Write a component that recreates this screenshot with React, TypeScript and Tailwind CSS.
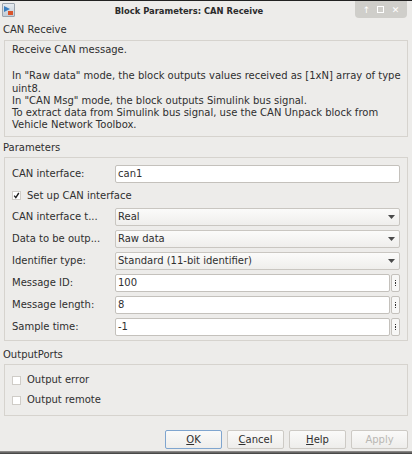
import React from 'react';

const Caret = () => (
  <svg width="7" height="4" viewBox="0 0 7 4" className="shrink-0">
    <path d="M0 0 L7 0 L3.5 4 Z" fill="#4a4a4a" />
  </svg>
);

const TextRow = ({ label, value, dots }: { label: string; value: string; dots?: boolean }) => (
  <div className="flex h-[18px] items-center">
    <div className="w-[103px] shrink-0 truncate">{label}</div>
    <div className="flex h-full flex-1 items-center rounded-[2px] border border-[#c4c1bc] bg-white pl-[2px]">{value}</div>
    {dots && (
      <div className="ml-[1px] flex h-full w-[9px] shrink-0 flex-col items-center justify-center gap-[1px] rounded-[2px] border border-[#c4c1bc] bg-[#f7f7f6]">
        <span className="h-[1.5px] w-[1.5px] bg-[#333]" />
        <span className="h-[1.5px] w-[1.5px] bg-[#333]" />
        <span className="h-[1.5px] w-[1.5px] bg-[#333]" />
      </div>
    )}
  </div>
);

const SelectRow = ({ label, value }: { label: string; value: string }) => (
  <div className="flex h-[18px] items-center">
    <div className="w-[103px] shrink-0 truncate">{label}</div>
    <div className="flex h-full flex-1 items-center justify-between rounded-[2px] border border-[#c9c6c1] bg-gradient-to-b from-[#fbfbfa] to-[#efeeec] pl-[2px] pr-[4px]">
      <span>{value}</span>
      <Caret />
    </div>
  </div>
);

const Check = ({ checked, label }: { checked?: boolean; label: string }) => (
  <div className="flex items-center">
    <div className="flex h-[9px] w-[9px] items-center justify-center border border-[#cfccc7] bg-white">
      {checked && (
        <svg width="7" height="7" viewBox="0 0 7 7">
          <path d="M1.2 3.6 L2.8 5.6 L5.8 1" stroke="#1e1e1e" strokeWidth="1.4" fill="none" />
        </svg>
      )}
    </div>
    <span className="ml-[6px]">{label}</span>
  </div>
);

const Button = ({ children, focus, disabled }: { children: React.ReactNode; focus?: boolean; disabled?: boolean }) => (
  <div
    className={
      'flex h-[19px] w-[57px] items-center justify-center rounded-[2px] border bg-gradient-to-b from-[#fafaf9] to-[#eeedeb] ' +
      (focus ? 'border-[#7fa5cf]' : 'border-[#cdcac5]') +
      (disabled ? ' text-[#b9b7b3]' : '')
    }
  >
    {children}
  </div>
);

export default function App() {
  return (
    <div className="flex h-[454px] w-[412px] flex-col overflow-hidden bg-[#edecea] font-['DejaVu_Sans',sans-serif] text-[10px] leading-[12px] text-[#2f2f2f]">
      {/* title bar */}
      <div className="relative flex h-[20px] shrink-0 items-center justify-center border-t border-[#222] pr-[34px]">
        <div className="absolute left-[2px] top-[2px] h-[14px] w-[13px] rounded-[1px] border border-[#9aa3ad] bg-gradient-to-b from-[#e6ebf0] to-[#c3ccd6]">
          <svg width="11" height="12" viewBox="0 0 11 12" className="absolute left-0 top-0">
            <path d="M1 2 L7 5 L1 8 Z" fill="#3b7fc0" />
            <rect x="5" y="7" width="5" height="4" fill="#d9542b" />
          </svg>
        </div>
        <span className="text-[8.4px] font-bold text-[#2b2b2b]">Block Parameters: CAN Receive</span>
        <div className="absolute right-[5px] top-0 flex h-[17px] w-[52px] items-center justify-around rounded-b-[4px] bg-[#cfceca] px-[4px] text-[9px] text-white">
          <span>↑</span>
          <span className="h-[7px] w-[7px] border border-white" />
          <span>✕</span>
        </div>
      </div>

      <div className="flex h-[20px] shrink-0 items-center pl-[3px]">CAN Receive</div>

      {/* description */}
      <div className="mx-[4px] h-[97px] shrink-0 border border-[#d6d3ce] pl-[7px] pr-[1px] pt-[3px] leading-[12.3px]">
        <p>Receive CAN message.</p>
        <p className="mt-[14px]">
          In "Raw data" mode, the block outputs values received as [1xN] array of type uint8.
          <br />
          In "CAN Msg" mode, the block outputs Simulink bus signal.
          <br />
          To extract data from Simulink bus signal, use the CAN Unpack block from Vehicle Network Toolbox.
        </p>
      </div>

      <div className="flex h-[20px] shrink-0 items-end pb-[3px] pl-[3px]">Parameters</div>

      {/* parameters */}
      <div className="mx-[4px] flex h-[184px] shrink-0 flex-col gap-[4px] border border-[#d6d3ce] px-[7px] pt-[7px]">
        <TextRow label="CAN interface:" value="can1" />
        <div className="flex h-[17px] items-center">
          <Check checked label="Set up CAN interface" />
        </div>
        <SelectRow label="CAN interface t..." value="Real" />
        <SelectRow label="Data to be outp..." value="Raw data" />
        <SelectRow label="Identifier type:" value="Standard (11-bit identifier)" />
        <TextRow label="Message ID:" value="100" dots />
        <TextRow label="Message length:" value="8" dots />
        <TextRow label="Sample time:" value="-1" dots />
      </div>

      <div className="flex h-[23px] shrink-0 items-end pb-[3px] pl-[3px]">OutputPorts</div>

      {/* output ports */}
      <div className="mx-[4px] flex h-[52px] shrink-0 flex-col border border-[#d6d3ce] px-[7px] pt-[5px]">
        <div className="flex h-[20px] items-center">
          <Check label="Output error" />
        </div>
        <div className="flex h-[20px] items-center">
          <Check label="Output remote" />
        </div>
      </div>

      {/* buttons */}
      <div className="mt-[14px] flex shrink-0 justify-end gap-[5px] pr-[4px]">
        <Button focus>
          <span className="underline">O</span>K
        </Button>
        <Button>
          <span className="underline">C</span>ancel
        </Button>
        <Button>
          <span className="underline">H</span>elp
        </Button>
        <Button disabled>Apply</Button>
      </div>

      <div className="mt-auto h-[3px] shrink-0 bg-gradient-to-b from-[#9a9896] to-[#3a3a3a]" />
    </div>
  );
}
